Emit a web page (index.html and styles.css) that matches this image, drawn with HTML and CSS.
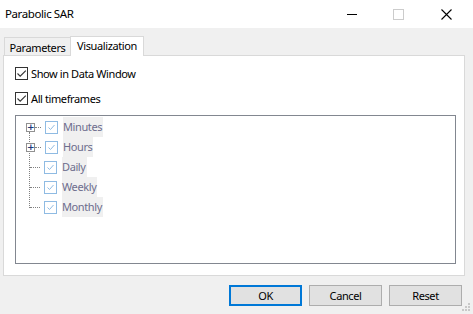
FILE: index.html
```html
<!DOCTYPE html>
<html lang="en">
<head>
    <meta charset="UTF-8">
    <title>Parabolic SAR</title>
    <link rel="stylesheet" href="styles.css">
</head>
<body>
    <div class="window">
        <div class="titlebar">
            <span class="title">Parabolic SAR</span>
            <div class="controls">
                <span class="ctl ctl-min"></span>
                <span class="ctl ctl-max"></span>
                <span class="ctl ctl-close">
                    <svg width="11" height="11" viewBox="0 0 11 11"><path d="M0.5 0.5L10.5 10.5M10.5 0.5L0.5 10.5" stroke="#000" stroke-width="1.1"/></svg>
                </span>
            </div>
        </div>

        <div class="tabs">
            <div class="tab">Parameters</div>
            <div class="tab active">Visualization</div>
        </div>

        <div class="panel">
            <label class="check-row">
                <span class="box"><svg width="11" height="11" viewBox="0 0 11 11"><path d="M1.5 5.5L4.2 8.2L9.8 2.6" fill="none" stroke="#333" stroke-width="1.1"/></svg></span>
                Show in Data Window
            </label>
            <label class="check-row">
                <span class="box"><svg width="11" height="11" viewBox="0 0 11 11"><path d="M1.5 5.5L4.2 8.2L9.8 2.6" fill="none" stroke="#333" stroke-width="1.1"/></svg></span>
                All timeframes
            </label>

            <div class="tree">
                <div class="tree-lines"></div>
                <div class="node">
                    <span class="expander">+</span>
                    <span class="dots short"></span>
                    <span class="tbox"><svg width="9" height="9" viewBox="0 0 9 9"><path d="M1.5 4.5L3.5 6.5L7.5 2" fill="none" stroke="#8fbbe3" stroke-width="1"/></svg></span>
                    <span class="label">Minutes</span>
                </div>
                <div class="node">
                    <span class="expander">+</span>
                    <span class="dots short"></span>
                    <span class="tbox"><svg width="9" height="9" viewBox="0 0 9 9"><path d="M1.5 4.5L3.5 6.5L7.5 2" fill="none" stroke="#8fbbe3" stroke-width="1"/></svg></span>
                    <span class="label">Hours</span>
                </div>
                <div class="node">
                    <span class="dots"></span>
                    <span class="tbox"><svg width="9" height="9" viewBox="0 0 9 9"><path d="M1.5 4.5L3.5 6.5L7.5 2" fill="none" stroke="#8fbbe3" stroke-width="1"/></svg></span>
                    <span class="label">Daily</span>
                </div>
                <div class="node">
                    <span class="dots"></span>
                    <span class="tbox"><svg width="9" height="9" viewBox="0 0 9 9"><path d="M1.5 4.5L3.5 6.5L7.5 2" fill="none" stroke="#8fbbe3" stroke-width="1"/></svg></span>
                    <span class="label">Weekly</span>
                </div>
                <div class="node">
                    <span class="dots"></span>
                    <span class="tbox"><svg width="9" height="9" viewBox="0 0 9 9"><path d="M1.5 4.5L3.5 6.5L7.5 2" fill="none" stroke="#8fbbe3" stroke-width="1"/></svg></span>
                    <span class="label">Monthly</span>
                </div>
            </div>
        </div>

        <div class="buttons">
            <button class="btn default">OK</button>
            <button class="btn">Cancel</button>
            <button class="btn">Reset</button>
        </div>

        <svg class="grip" width="8" height="8" viewBox="0 0 8 8">
            <rect x="6" y="0" width="2" height="2" fill="#c8c8c8"/>
            <rect x="3" y="3" width="2" height="2" fill="#c8c8c8"/>
            <rect x="6" y="3" width="2" height="2" fill="#c8c8c8"/>
            <rect x="0" y="6" width="2" height="2" fill="#c8c8c8"/>
            <rect x="3" y="6" width="2" height="2" fill="#c8c8c8"/>
            <rect x="6" y="6" width="2" height="2" fill="#c8c8c8"/>
        </svg>
    </div>
</body>
</html>
```

FILE: styles.css
```css
body {
    margin: 0;
    background-color: #f0f0f0;
    font-family: "Noto Sans", "Open Sans", sans-serif;
    font-size: 11px;
    letter-spacing: -0.4px;
    color: #000;
}

.window {
    position: relative;
    width: 473px;
    height: 314px;
    display: flex;
    flex-direction: column;
}

.titlebar {
    height: 28px;
    background-color: #fff;
    display: flex;
    align-items: center;
    justify-content: space-between;
    padding-left: 5px;
}

.title {
    font-size: 11.5px;
    margin-top: -2px;
}

.controls {
    display: flex;
    height: 28px;
}

.ctl {
    width: 46px;
    display: flex;
    align-items: center;
    justify-content: center;
}

.ctl-min::before {
    content: "";
    width: 10px;
    height: 1px;
    background-color: #000;
}

.ctl-max::before {
    content: "";
    width: 9px;
    height: 9px;
    border: 1px solid #cccccc;
}

.ctl-close {
    width: 50px;
    margin-right: 2px;
}

.tabs {
    height: 27px;
    display: flex;
    align-items: flex-end;
    padding-left: 4px;
}

.tab {
    width: 65px;
    height: 17px;
    border: 1px solid #d9d9d9;
    border-bottom: none;
    background-color: #f0f0f0;
    line-height: 19px;
    text-align: center;
}

.tab.active {
    width: 72px;
    height: 19px;
    background-color: #fff;
    margin-left: -1px;
    margin-bottom: -1px;
    position: relative;
    z-index: 1;
    line-height: 17px;
}

.panel {
    width: 462px;
    height: 221px;
    margin-left: 3px;
    border: 1px solid #d9d9d9;
    background-color: #fff;
    padding: 10px 0 0 11px;
    box-sizing: border-box;
}

.check-row {
    display: flex;
    align-items: center;
    height: 14px;
    margin-bottom: 11px;
    gap: 3px;
}

.box {
    width: 11px;
    height: 11px;
    border: 1px solid #333;
    background-color: #fff;
    display: flex;
}

.tree {
    position: relative;
    width: 441px;
    height: 149px;
    border: 1px solid #828790;
    box-sizing: border-box;
    padding-top: 1px;
    margin-top: -1px;
}

.tree-lines {
    position: absolute;
    left: 13px;
    top: 16px;
    height: 76px;
    border-left: 1px dotted #808080;
}

.node {
    height: 20px;
    display: flex;
    align-items: center;
    padding-left: 10px;
    position: relative;
}

.expander {
    width: 7px;
    height: 7px;
    border: 1px solid #919191;
    background-color: #fff;
    font-size: 9px;
    line-height: 7px;
    text-align: center;
    color: #1e3b7a;
    font-weight: bold;
    font-family: "DejaVu Sans", sans-serif;
    letter-spacing: 0;
    position: relative;
    z-index: 1;
}

.dots {
    width: 10px;
    margin-left: 4px;
    border-top: 1px dotted #808080;
    margin-right: 4px;
}

.dots.short {
    width: 6px;
    margin-left: 0;
}

.tbox {
    width: 11px;
    height: 11px;
    border: 1px solid #8fbbe3;
    display: flex;
    align-items: center;
    justify-content: center;
    margin-right: 5px;
}

.label {
    height: 20px;
    line-height: 20px;
    background-color: #f0f0f0;
    color: #6d6d8d;
    padding-right: 1px;
}

.buttons {
    display: flex;
    justify-content: flex-end;
    gap: 7px;
    padding: 9px 11px 0 0;
}

.btn {
    width: 73px;
    height: 21px;
    background-color: #e1e1e1;
    border: 1px solid #adadad;
    font-family: "Noto Sans", "Open Sans", sans-serif;
    font-size: 11px;
    letter-spacing: -0.4px;
    padding: 0;
    color: #000;
}

.btn.default {
    border: 2px solid #0078d7;
}

.grip {
    position: absolute;
    right: 3px;
    bottom: 3px;
}
```
